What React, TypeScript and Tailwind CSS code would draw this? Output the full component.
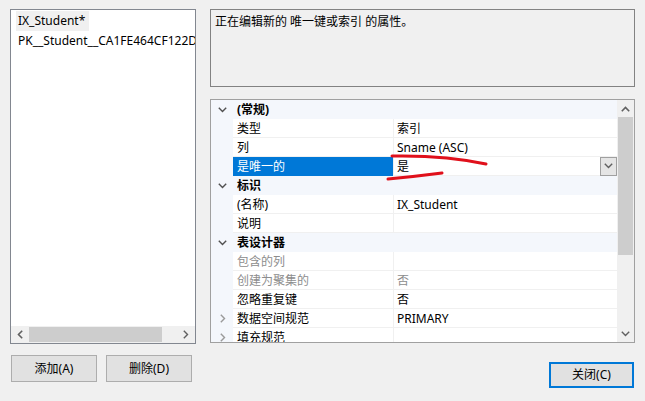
import React from "react";

const font = { fontFamily: '"Noto Sans", "Noto Sans CJK SC", sans-serif' };

function ChevDown({ color = "#606060" }: { color?: string }) {
  return (
    <svg width="9" height="6" viewBox="0 0 9 6" className="block">
      <path d="M0.8 0.8 L4.5 4.5 L8.2 0.8" fill="none" stroke={color} strokeWidth="1.4" />
    </svg>
  );
}
function ChevRight({ color = "#9a9a9a" }: { color?: string }) {
  return (
    <svg width="6" height="9" viewBox="0 0 6 9" className="block">
      <path d="M0.8 0.8 L4.5 4.5 L0.8 8.2" fill="none" stroke={color} strokeWidth="1.4" />
    </svg>
  );
}
function ChevUp({ color = "#606060" }: { color?: string }) {
  return (
    <svg width="9" height="6" viewBox="0 0 9 6" className="block">
      <path d="M0.8 5.2 L4.5 1.5 L8.2 5.2" fill="none" stroke={color} strokeWidth="1.6" />
    </svg>
  );
}
function ChevLeft({ color = "#606060" }: { color?: string }) {
  return (
    <svg width="6" height="9" viewBox="0 0 6 9" className="block">
      <path d="M5.2 0.8 L1.5 4.5 L5.2 8.2" fill="none" stroke={color} strokeWidth="1.6" />
    </svg>
  );
}

type Row =
  | { kind: "cat"; label: string }
  | {
      kind: "item";
      name: string;
      value?: string;
      disabled?: boolean;
      selected?: boolean;
      expander?: boolean;
      dropdown?: boolean;
    };

const rows: Row[] = [
  { kind: "cat", label: "(常规)" },
  { kind: "item", name: "类型", value: "索引" },
  { kind: "item", name: "列", value: "Sname (ASC)" },
  { kind: "item", name: "是唯一的", value: "是", selected: true, dropdown: true },
  { kind: "cat", label: "标识" },
  { kind: "item", name: "(名称)", value: "IX_Student" },
  { kind: "item", name: "说明", value: "" },
  { kind: "cat", label: "表设计器" },
  { kind: "item", name: "包含的列", value: "", disabled: true },
  { kind: "item", name: "创建为聚集的", value: "否", disabled: true },
  { kind: "item", name: "忽略重复键", value: "否" },
  { kind: "item", name: "数据空间规范", value: "PRIMARY", expander: true },
  { kind: "item", name: "填充规范", value: "", expander: true },
];

function GridRow({ row }: { row: Row }) {
  if (row.kind === "cat") {
    return (
      <div className="flex h-[19px] shrink-0 items-center bg-[#f4f7fc]">
        <div className="flex w-[22px] shrink-0 justify-center pl-[1px]">
          <ChevDown color="#505050" />
        </div>
        <div className="pl-[4px] pt-[1px] text-[12px] font-bold text-black">{row.label}</div>
      </div>
    );
  }
  const textColor = row.disabled ? "text-[#8d8d8d]" : "text-black";
  return (
    <div className="flex h-[19px] shrink-0">
      <div className="flex w-[22px] shrink-0 items-center justify-center bg-[#f4f7fc] pl-[2px]">
        {row.expander ? <ChevRight /> : null}
      </div>
      <div
        className={
          "flex w-[160px] shrink-0 items-center pl-[4px] pt-[1px] text-[12px] " +
          (row.selected
            ? "bg-[#0078d7] text-white"
            : "border-b border-[#f0f0f0] bg-white " + textColor)
        }
      >
        {row.name}
      </div>
      <div className="w-[1px] shrink-0 bg-[#f0f0f0]" />
      <div
        className={
          "flex min-w-0 flex-1 items-center border-b border-[#f0f0f0] bg-white pl-[3px] text-[12px] " +
          textColor
        }
      >
        <span className="flex-1 whitespace-nowrap pt-[1px]">{row.value}</span>
        {row.dropdown ? (
          <div className="flex h-[19px] w-[17px] shrink-0 items-center justify-center border border-[#a0a0a0] bg-[#e5e5e5]">
            <ChevDown color="#606060" />
          </div>
        ) : null}
      </div>
    </div>
  );
}

export default function App() {
  return (
    <div
      className="relative flex h-[401px] w-[645px] overflow-hidden bg-[#f0f0f0] pl-[10px] pt-[9px] text-[12px] text-black"
      style={font}
    >
      {/* Left column */}
      <div className="flex w-[186px] shrink-0 flex-col">
        <div className="flex h-[335px] flex-col border border-[#828790] bg-white">
          <div className="flex flex-1 flex-col overflow-hidden pl-[5px] pt-[1px]">
            <div className="flex h-[20px] w-[73px] items-center bg-[#f0f0f0] pl-[2px] whitespace-nowrap">
              IX_Student*
            </div>
            <div className="flex h-[20px] items-center pl-[2px] whitespace-nowrap">
              PK__Student__CA1FE464CF122D
            </div>
          </div>
          <div className="flex h-[17px] shrink-0 items-center bg-[#f0f0f0]">
            <div className="flex w-[18px] shrink-0 justify-center">
              <ChevLeft />
            </div>
            <div className="h-[15px] w-[133px] bg-[#cdcdcd]" />
            <div className="flex flex-1 justify-end pr-[6px]">
              <ChevRight color="#606060" />
            </div>
          </div>
        </div>
        <div className="mt-[11px] flex gap-[9px] pl-[1px]">
          <button className="flex h-[27px] w-[86px] items-center justify-center border border-[#adadad] bg-[#e1e1e1] text-[12px]">
            添加(A)
          </button>
          <button className="flex h-[27px] w-[86px] items-center justify-center border border-[#adadad] bg-[#e1e1e1] text-[12px]">
            删除(D)
          </button>
        </div>
      </div>

      {/* Right column */}
      <div className="ml-[14px] flex w-[425px] shrink-0 flex-col">
        <div className="h-[78px] border border-[#828282] bg-[#f0f0f0] px-[4px] pt-[3px] text-[12px]">
          正在编辑新的 唯一键或索引 的属性。
        </div>
        <div className="mt-[12px] flex h-[244px] border border-[#a0a0a0] bg-white">
          <div className="flex flex-1 flex-col overflow-hidden">
            {rows.map((r, i) => (
              <GridRow key={i} row={r} />
            ))}
          </div>
          <div className="flex w-[17px] shrink-0 flex-col items-center bg-[#f0f0f0]">
            <div className="flex h-[17px] items-center justify-center">
              <ChevUp />
            </div>
            <div className="h-[138px] w-[15px] bg-[#cdcdcd]" />
            <div className="flex-1" />
            <div className="flex h-[17px] items-center justify-center">
              <ChevDown color="#606060" />
            </div>
          </div>
        </div>
        <div className="mt-[19px] flex justify-end pr-[1px]">
          <button className="flex h-[26px] w-[85px] items-center justify-center border-2 border-[#0078d7] bg-[#e1e1e1] text-[12px]">
            关闭(C)
          </button>
        </div>
      </div>

      {/* Red hand-drawn annotations */}
      <svg
        className="pointer-events-none absolute left-0 top-0"
        width="645"
        height="401"
        viewBox="0 0 645 401"
      >
        <path
          d="M392 156 Q 445 155 486 164"
          fill="none"
          stroke="#e0101b"
          strokeWidth="3"
          strokeLinecap="round"
        />
        <path
          d="M388 179 Q 415 176.5 442 173"
          fill="none"
          stroke="#e0101b"
          strokeWidth="3"
          strokeLinecap="round"
        />
      </svg>
    </div>
  );
}
